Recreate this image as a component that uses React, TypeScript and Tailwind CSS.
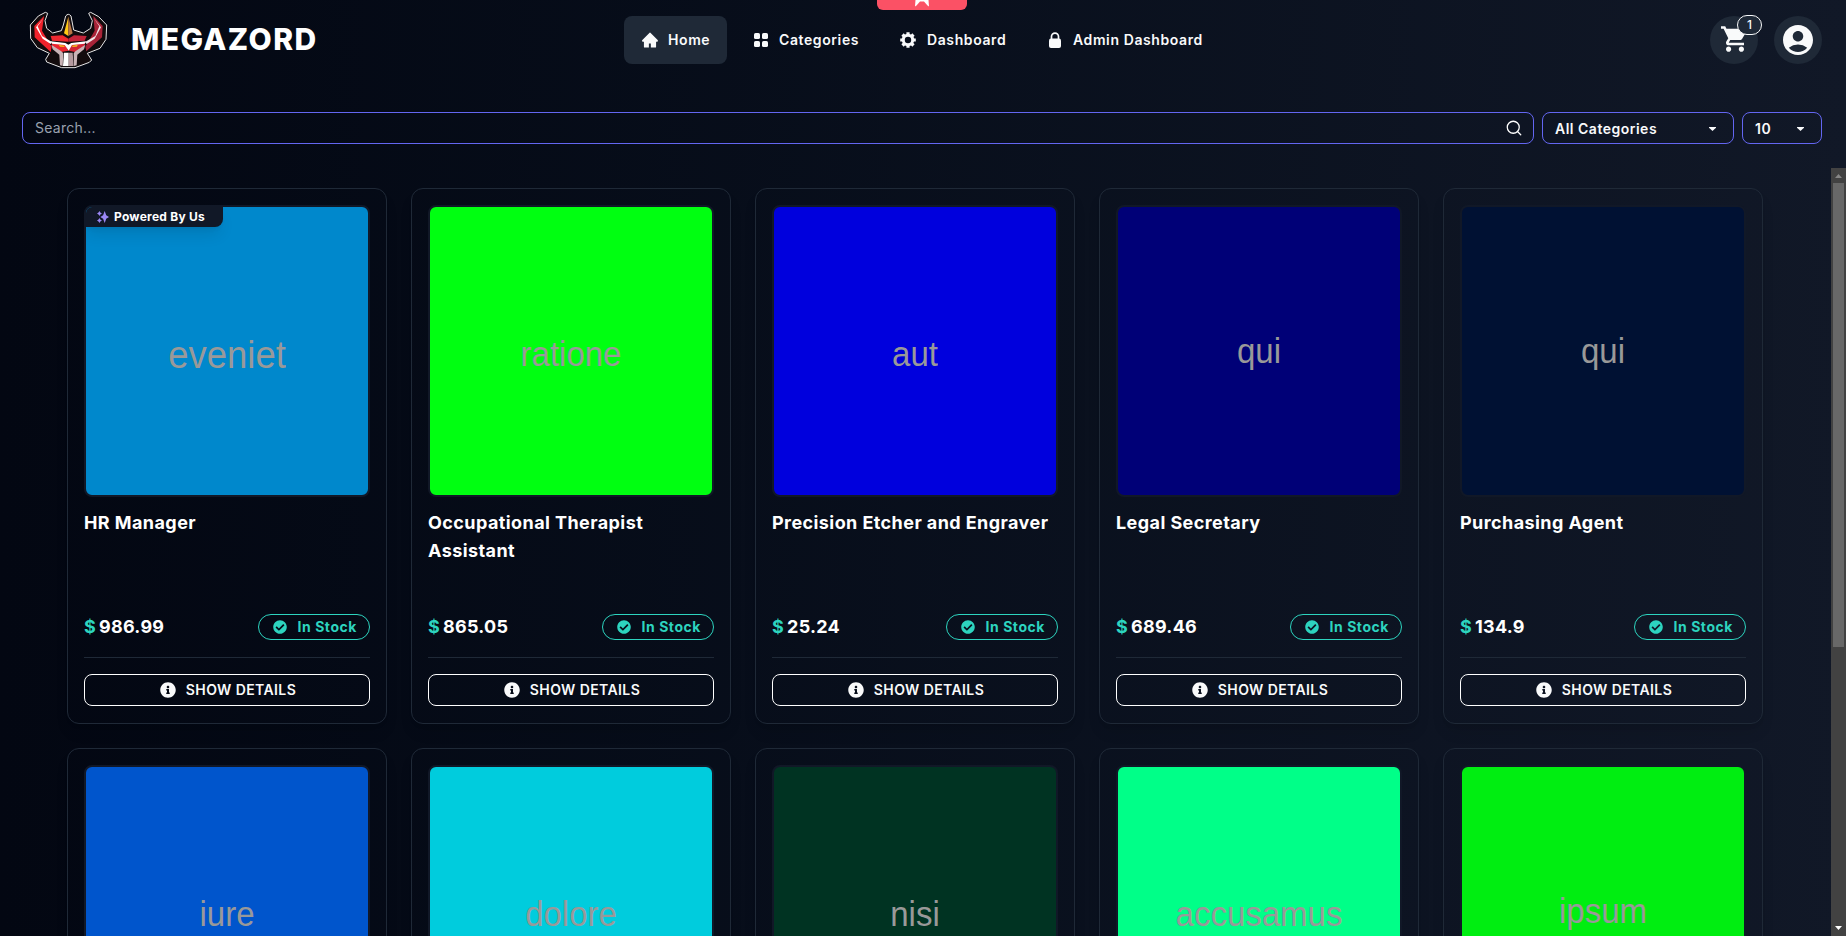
import { AiFillHome } from "react-icons/ai";
import { IoMdCart } from "react-icons/io";
import { MdAccountCircle } from "react-icons/md";
import { FiSearch } from "react-icons/fi";
import { FaInfoCircle, FaCheckCircle } from "react-icons/fa";

type Product = { label: string; bg: string; text: string; name?: string; price?: string; powered?: boolean };

const tall = "pt-2 text-[33px]";
const low = "pt-0.5 text-[33px]";

const products: Product[] = [
  { label: "eveniet", bg: "bg-[#0088cc]", text: "pt-[9px] text-[36.500px]", name: "HR Manager", price: "986.99", powered: true },
  { label: "ratione", bg: "bg-[#00ff11]", text: tall, name: "Occupational Therapist Assistant", price: "865.05" },
  { label: "aut", bg: "bg-[#0000dd]", text: tall, name: "Precision Etcher and Engraver", price: "25.24" },
  { label: "qui", bg: "bg-[#000077]", text: low, name: "Legal Secretary", price: "689.46" },
  { label: "qui", bg: "bg-[#001133]", text: low, name: "Purchasing Agent", price: "134.9" },
  { label: "iure", bg: "bg-[#0055cc]", text: tall },
  { label: "dolore", bg: "bg-[#00ccdd]", text: tall },
  { label: "nisi", bg: "bg-[#003322]", text: tall },
  { label: "accusamus", bg: "bg-[#00ff88]", text: tall },
  { label: "ipsum", bg: "bg-[#00ee11]", text: low },
];

function Logo() {
  return (
    <svg className="h-[60px] w-[80px]" viewBox="84 30 240 180">
      <path
        d="M143 40 L135 62 L140 85 L158 99 L184 92 L190 75 L197 48 Q205 38 213 48 L221 90 L250 99 L272 85 L277 62 L266 40 L272 37 L296 50 L320 75 L318 118 L300 145 L262 160 L275 180 L268 187 L225 203 L185 203 L140 186 L137 178 L148 160 L112 143 L92 115 L91 75 L115 48 L136 37 Z"
        fill="#120b0d"
        stroke="#e6e6e6"
        strokeWidth="3"
        strokeLinejoin="round"
      />
      <path d="M132 48 L103 78 L104 112 L152 156 L155 140 L126 92 Z" fill="#f0222b" />
      <path d="M280 48 L308 78 L306 112 L259 154 L256 140 L284 92 Z" fill="#a92337" />
      <path d="M131 54 L113 79 L126 108 L156 126 L152 132 L128 116 L108 82 Z" fill="#fff" />
      <path d="M281 54 L298 79 L286 108 L255 126 L260 132 L284 116 L303 82 Z" fill="#f0e6e8" />
      <path d="M205 50 L192 100 L205 108 Z" fill="#ffc814" />
      <path d="M205 50 L218 100 L205 108 Z" fill="#b87546" />
      <path d="M152 108 L188 106 L205 116 L205 125 L156 122 Z" fill="#ee2930" />
      <path d="M260 108 L222 106 L205 116 L205 125 L254 122 Z" fill="#c4243a" />
      <path d="M154 128 L195 132 L205 152 L184 156 L160 146 Z" fill="#ec2530" />
      <path d="M256 128 L215 132 L205 152 L226 156 L250 146 Z" fill="#d32435" />
      <path d="M152 124 L196 129 L205 134 L214 129 L258 124 L254 131 L216 135 L206 152 L194 135 L156 131 Z" fill="#fff" />
      <path d="M176 134 L195 137 L192 141 L180 140 Z M234 134 L215 137 L218 141 L230 140 Z" fill="#f2b51c" />
      <path d="M154 134 L184 154 L190 160 L188 198 L180 196 L178 164 L158 148 Z M256 134 L226 154 L221 160 L222 198 L230 196 L232 164 L252 148 Z" fill="#c9b3b6" />
      <path d="M192 158 H206 V198 H189 Z" fill="#fff" />
      <path d="M206 158 H218 L221 198 H206 Z" fill="#b59a9f" />
    </svg>
  );
}

function GridIcon() {
  return (
    <svg className="size-4" viewBox="0 0 16 16" fill="currentColor">
      <rect x="1" y="1" width="6" height="6" rx="1.600" />
      <rect x="9" y="1" width="6" height="6" rx="1.600" />
      <rect x="1" y="9" width="6" height="6" rx="1.600" />
      <rect x="9" y="9" width="6" height="6" rx="1.600" />
    </svg>
  );
}

function GearIcon() {
  return (
    <svg className="size-4" viewBox="0 0 16 16" fill="none" stroke="currentColor">
      <circle cx="8" cy="8" r="4.700" strokeWidth="3" />
      <path d="M8 0.200V3 M8 13V15.800 M0.200 8H3 M13 8H15.800 M2.500 2.500L4.500 4.500 M11.500 11.500L13.500 13.500 M13.500 2.500L11.500 4.500 M4.500 11.500L2.500 13.500" strokeWidth="3.200" />
    </svg>
  );
}

function LockIcon() {
  return (
    <svg className="h-4 w-3.500" viewBox="0 0 14 16">
      <path d="M3.500 8V4.600A3.500 3.500 0 0 1 10.500 4.600V8" fill="none" stroke="currentColor" strokeWidth="1.700" />
      <rect x="1" y="6.500" width="12" height="9.500" rx="2" fill="currentColor" />
    </svg>
  );
}

function Caret() {
  return (
    <svg className="h-1 w-[7px]" viewBox="0 0 7 4" fill="currentColor">
      <path d="M0 0H7V0.800L3.500 4L0 0.800Z" />
    </svg>
  );
}

function Sparkles() {
  return (
    <svg className="size-3 fill-[#9b87f5]" viewBox="0 0 12 12">
      <path d="M7.700 0 L9.200 4.200 L12 6 L9.200 7.800 L7.700 12 L6.100 7.800 L3.400 6 L6.100 4.200 Z" />
      <path d="M2.400 0 L3.300 1.600 L4.900 2.500 L3.300 3.400 L2.400 5 L1.500 3.400 L0 2.500 L1.500 1.600 Z" />
      <path d="M2.400 7 L3.300 8.600 L4.900 9.500 L3.300 10.400 L2.400 12 L1.500 10.400 L0 9.500 L1.500 8.600 Z" />
    </svg>
  );
}

function Card({ p }: { p: Product }) {
  return (
    <article className="flex h-[536px] w-[320px] flex-col rounded-xl border border-[#1f2937] p-4 shadow-lg">
      <div className={`relative flex h-[292px] shrink-0 items-center justify-center overflow-hidden rounded-lg border-2 border-[#111827] ${p.bg} ${p.text}`}>
        <span className="scale-y-[1.04] font-['Liberation_Sans',sans-serif] leading-10 text-[#999]">{p.label}</span>
        {p.powered && (
          <div className="absolute -top-0.5 -left-0.5 flex h-[22px] w-[139px] items-center gap-[5px] rounded-br-lg bg-[#111827] pt-px pl-[13px] text-xs font-bold tracking-[0.25px] whitespace-nowrap text-white shadow-lg">
            <Sparkles />
            Powered By Us
          </div>
        )}
      </div>
      {p.name && (
        <>
          <h2 className="mt-3 h-[105px] text-lg leading-7 font-bold tracking-[0.42px] text-white">{p.name}</h2>
          <div className="flex h-[26px] items-center justify-between">
            <p className="text-lg leading-7 font-bold tracking-[0.25px] text-white">
              <span className="text-[#2dd4bf]">$</span><span className="ml-[3px]">{p.price}</span>
            </p>
            <span className="flex h-[26px] w-[112px] items-center justify-between rounded-full border border-[#2dd4bf] pr-[12px] pl-[14px] text-sm font-bold tracking-[0.55px] text-[#2dd4bf]">
              <FaCheckCircle className="size-[14px]" />
              In Stock
            </span>
          </div>
          <hr className="mt-[17px] border-[#1f2937]" />
          <button className="mt-4 flex h-8 items-center justify-center gap-2.5 rounded-lg border border-white pl-0.5 text-sm font-semibold tracking-[0.4px]">
            <FaInfoCircle className="size-4" />
            SHOW DETAILS
          </button>
        </>
      )}
    </article>
  );
}

export default function App() {
  return (
    <div className="flex h-[936px] w-[1846px] flex-col overflow-hidden bg-linear-to-r from-[#030712] to-[#111827] font-['Inter',sans-serif] text-gray-50">
      <header className="relative flex h-20 shrink-0 items-center">
        <div className="flex w-[624px] items-center gap-[23px] pl-7">
          <Logo />
          <span className="pb-0.5 text-[30px] leading-9 font-extrabold tracking-[1.4px] text-white">MEGAZORD</span>
        </div>
        <nav className="flex items-center text-sm font-semibold tracking-[0.6px] whitespace-nowrap">
          <a className="flex h-12 w-[103px] items-center gap-[9px] rounded-lg bg-[#1f2937] pl-[17px]"><AiFillHome className="size-[18px]" />Home</a>
          <a className="ml-[26px] flex w-[121px] items-center gap-[10px]"><GridIcon />Categories</a>
          <a className="ml-[26px] flex w-[122px] items-center gap-[11px]"><GearIcon />Dashboard</a>
          <a className="ml-[26px] flex items-center gap-[11px]"><LockIcon />Admin Dashboard</a>
        </nav>
        <div className="mr-6 ml-auto flex gap-4">
          <button className="relative flex size-12 items-center justify-center rounded-full bg-[#1f2937] pb-0.5">
            <IoMdCart className="size-8" />
            <span className="absolute -top-px left-[27px] flex h-5 w-[25px] items-center justify-center rounded-full border border-gray-50 bg-[#1f2937] text-xs font-medium">1</span>
          </button>
          <button className="flex size-12 items-center justify-center rounded-full bg-[#1f2937]"><MdAccountCircle className="size-9" /></button>
        </div>
        <div className="absolute top-0 left-[877px] flex h-[10px] w-[90px] justify-center overflow-hidden rounded-b-md bg-[#fb5165]">
          <svg className="h-[7px] w-[14px]" viewBox="0 0 14 7"><path d="M0.500 0H13.500L14 6.500L12.500 5.500L9 1.500H5L1.500 5.500L0 6.500Z" fill="#fff" /></svg>
        </div>
      </header>
      <div className="mt-8 flex h-8 shrink-0 gap-2 pr-6 pl-[22px]">
        <div className="flex w-[1512px] items-center justify-between rounded-lg border border-[#6366f1] pr-[10px] pl-3 text-sm tracking-[0.25px] text-gray-400">Search...<FiSearch className="size-[18px] stroke-[1.700] text-white" /></div>
        <div className="flex w-48 items-center justify-between rounded-lg border border-[#6366f1] pt-px pr-[17px] pl-3 text-sm font-semibold tracking-[0.5px]">All Categories<Caret /></div>
        <div className="flex w-20 items-center justify-between rounded-lg border border-[#6366f1] pt-px pr-[17px] pl-3 text-sm font-semibold tracking-[0.55px]">10<Caret /></div>
      </div>
      <div className="mt-6 flex min-h-0 flex-1">
        <main className="grid flex-1 auto-rows-[536px] grid-cols-[repeat(5,320px)] gap-6 overflow-hidden pt-5 pl-[67px]">
          {products.map((p, i) => <Card key={i} p={p} />)}
        </main>
        <div className="flex w-[15px] flex-col items-center justify-between bg-[#424242]">
          <svg className="h-[15px] w-[15px] shrink-0" viewBox="0 0 15 15"><path d="M4 10L7.500 6L11 10Z" fill="#868686" /></svg>
          <div className="h-[464px] w-[11px] shrink-0 bg-[#686868]" />
          <div className="flex-1" />
          <svg className="h-[15px] w-[15px] shrink-0" viewBox="0 0 15 15"><path d="M4 5L7.500 9L11 5Z" fill="#fff" /></svg>
        </div>
      </div>
    </div>
  );
}
